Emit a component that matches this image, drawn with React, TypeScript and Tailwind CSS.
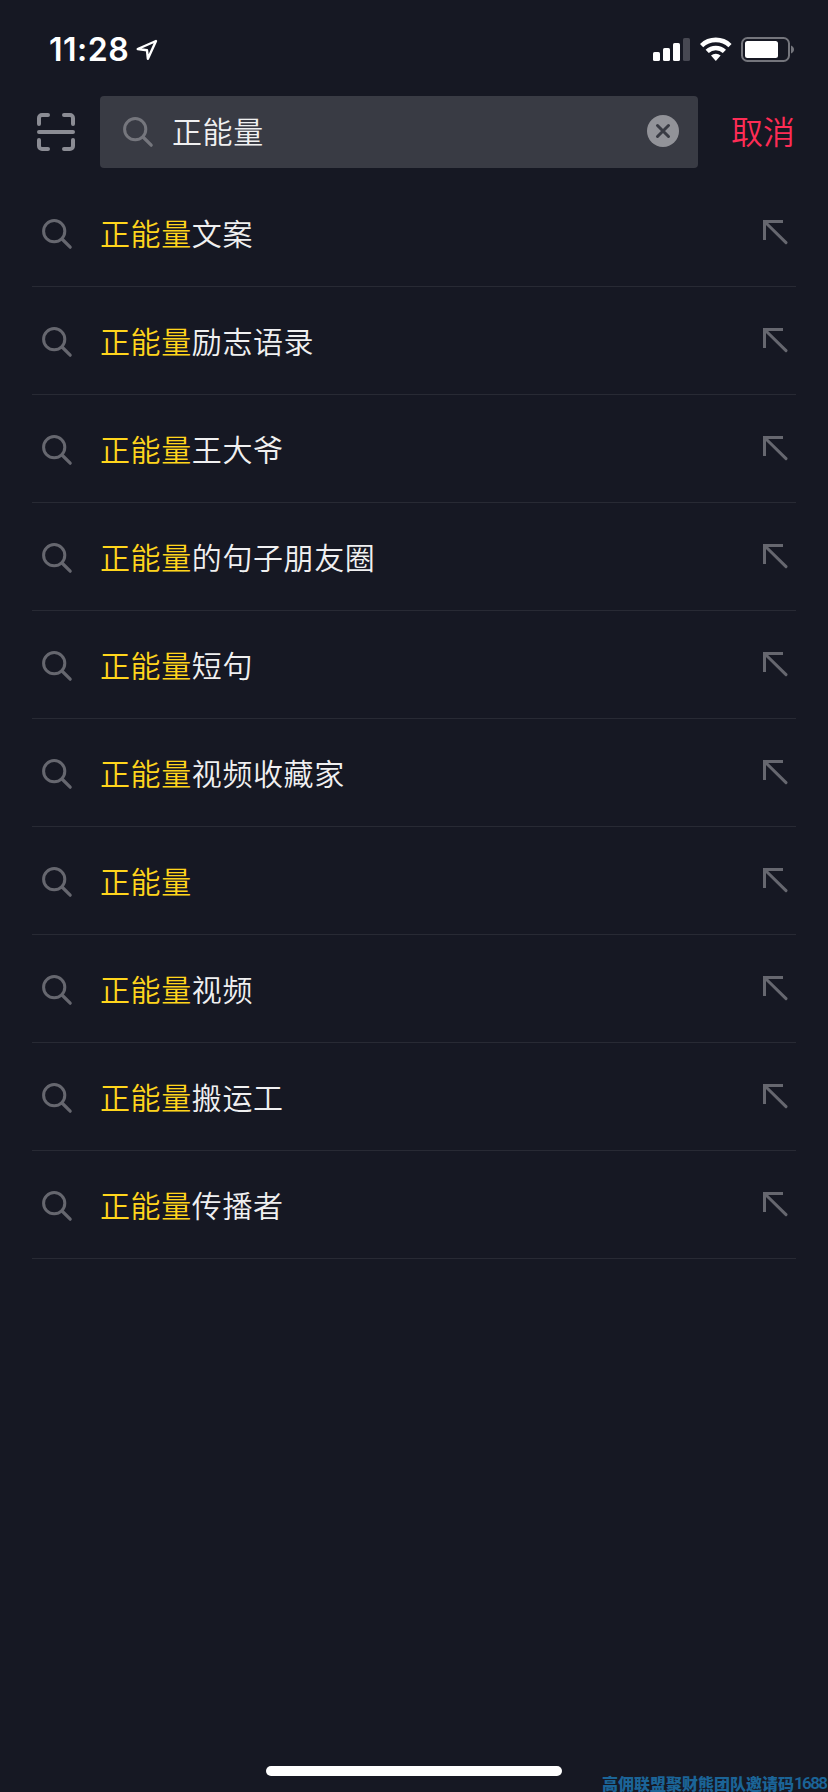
const keyword = '正能量';

const suggestions = ['文案', '励志语录', '王大爷', '的句子朋友圈', '短句', '视频收藏家', '', '视频', '搬运工', '传播者'];

function SearchIcon({ className }: { className: string }) {
  return (
    <svg width="32" height="32" viewBox="0 0 32 32" fill="none" stroke="currentColor" strokeWidth="3" className={className}>
      <circle cx="13.2" cy="13.2" r="10.6" />
      <path d="M21 21 29.2 29.2" strokeWidth="3.2" strokeLinecap="round" />
    </svg>
  );
}

function ScanIcon() {
  return (
    <svg width="38" height="38" viewBox="0 0 38 38" fill="none" stroke="currentColor" strokeWidth="4" strokeLinecap="round" className="text-[#8b8c94]">
      <path d="M2 11V5a3 3 0 0 1 3-3h6M27 2h6a3 3 0 0 1 3 3v6M36 27v6a3 3 0 0 1-3 3h-6M11 36H5a3 3 0 0 1-3-3v-6M2 19h34" />
    </svg>
  );
}

function FillArrow() {
  return (
    <svg width="26" height="26" viewBox="0 0 26 26" fill="none" stroke="currentColor" strokeWidth="3" className="mt-[40px] shrink-0 text-[#66676f]">
      <path d="M2.5 21V2.5H21" />
      <path d="M3 3l21 20.6" strokeLinecap="round" />
    </svg>
  );
}

function StatusBar() {
  return (
    <div className="flex h-[96px] items-start pl-[49px] text-white">
      <span className="mt-[30px] w-[82px] whitespace-nowrap font-['Inter'] text-[32px] leading-[39px] font-semibold tracking-[0.5px]">11:28</span>
      <svg width="24" height="24" viewBox="0 0 24 24" fill="none" stroke="currentColor" strokeWidth="2.4" strokeLinejoin="round" className="mt-[38px] ml-[4px]">
        <path d="M21 3 2.7 11l9.3 1.3.9 8.5z" />
      </svg>
      <svg width="38" height="24" viewBox="0 0 38 24" fill="currentColor" className="mt-[38px] ml-[494px]">
        <rect x="0" y="14" width="7" height="9" rx="1.6" />
        <rect x="10" y="10" width="7" height="13" rx="1.6" />
        <rect x="20" y="5" width="7" height="18" rx="1.6" />
        <rect x="30" y="0" width="7" height="23" rx="1.6" fill="#474852" />
      </svg>
      <svg width="32" height="24" viewBox="0 0 32 24" fill="none" stroke="currentColor" strokeWidth="4.6" className="mt-[37px] ml-[9px]">
        <path d="M1.6 8.6a20.6 20.6 0 0 1 28.4 0" />
        <path d="M7.2 14.4a12.4 12.4 0 0 1 17.2 0" />
        <path d="M11 18.6a6.9 6.9 0 0 1 9.6 0L15.8 23.9z" fill="currentColor" stroke="none" />
      </svg>
      <svg width="54" height="26" viewBox="0 0 54 26" className="mt-[37px] ml-[9px]">
        <rect x="1" y="1" width="47" height="23" rx="5.5" fill="none" stroke="#74757c" strokeWidth="2" />
        <rect x="4" y="4" width="33" height="17" rx="2.5" fill="currentColor" />
        <path d="M50 8.5c4 1.6 4 6.4 0 8z" fill="#74757c" />
      </svg>
    </div>
  );
}

export default function App() {
  return (
    <main className="relative flex h-[1792px] w-[828px] flex-col overflow-hidden bg-[#161823] font-['Noto_Sans_CJK_SC',sans-serif]">
      <StatusBar />
      <header className="flex h-[72px] shrink-0 items-center pl-[37px]">
        <ScanIcon />
        <div className="ml-[25px] flex h-[72px] w-[598px] items-center rounded-[4px] bg-[#393b44] pr-[19px] pl-[22px]">
          <SearchIcon className="text-[#75767d]" />
          <span className="-mt-[4px] ml-[18px] flex-1 text-[30px] leading-[44px] font-[350] tracking-[0.6px] text-[#f0f0f1]">{keyword}</span>
          <svg width="32" height="32" viewBox="0 0 32 32" className="-mt-[2px]">
            <circle cx="16" cy="16" r="16" fill="#929399" />
            <path d="m10.5 10.5 11 11m0-11-11 11" stroke="#393b44" strokeWidth="3" strokeLinecap="round" />
          </svg>
        </div>
        <span className="-mt-[4px] ml-[33px] text-[32px] leading-[46px] font-[350] whitespace-nowrap text-[#fe2c55]">取消</span>
      </header>
      <ul className="mt-[11px] ml-[32px] w-[764px]">
        {suggestions.map((rest) => (
          <li key={rest} className="flex h-[108px] items-start border-b border-[#282a34] pl-[9px]">
            <SearchIcon className="mt-[39px] text-[#66676f]" />
            <p className="mt-[31px] ml-[27px] flex-1 text-[30px] leading-[44px] font-[350] tracking-[0.6px] text-[#f0f0f1]">
              <span className="text-[#ffd51c]">{keyword}</span>
              {rest}
            </p>
            <div className="pr-[8px]">
              <FillArrow />
            </div>
          </li>
        ))}
      </ul>
      <div className="mt-auto mb-[16px] ml-[266px] h-[10px] w-[296px] rounded-full bg-white" />
      <div className="absolute right-0 bottom-0 flex items-end text-[16px] leading-[18px] font-black whitespace-nowrap text-[#1b6497]">
        <span>高佣联盟聚财熊团队邀请码</span>
        <span className="w-[34px] font-['Roboto'] text-[17px] leading-[17px] font-semibold tracking-[-1.6px]">1688</span>
      </div>
    </main>
  );
}
